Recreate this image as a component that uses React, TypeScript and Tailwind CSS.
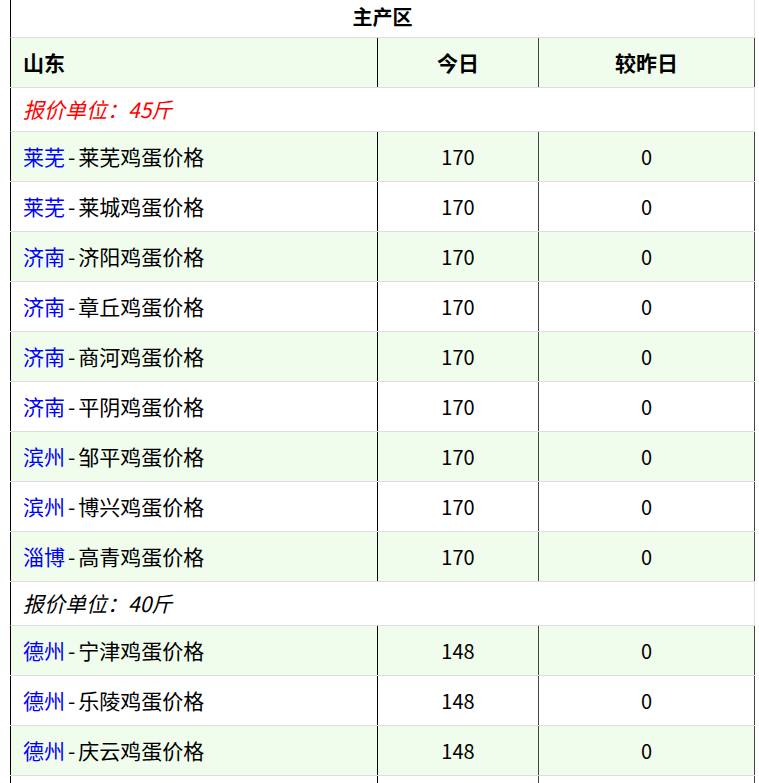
import React from 'react';

type Row = { city: string; name: string; today: string; diff: string };

const groups: { unit: string; red: boolean; rows: Row[] }[] = [
  {
    unit: '45斤',
    red: true,
    rows: [
      { city: '莱芜', name: '莱芜鸡蛋价格', today: '170', diff: '0' },
      { city: '莱芜', name: '莱城鸡蛋价格', today: '170', diff: '0' },
      { city: '济南', name: '济阳鸡蛋价格', today: '170', diff: '0' },
      { city: '济南', name: '章丘鸡蛋价格', today: '170', diff: '0' },
      { city: '济南', name: '商河鸡蛋价格', today: '170', diff: '0' },
      { city: '济南', name: '平阴鸡蛋价格', today: '170', diff: '0' },
      { city: '滨州', name: '邹平鸡蛋价格', today: '170', diff: '0' },
      { city: '滨州', name: '博兴鸡蛋价格', today: '170', diff: '0' },
      { city: '淄博', name: '高青鸡蛋价格', today: '170', diff: '0' },
    ],
  },
  {
    unit: '40斤',
    red: false,
    rows: [
      { city: '德州', name: '宁津鸡蛋价格', today: '148', diff: '0' },
      { city: '德州', name: '乐陵鸡蛋价格', today: '148', diff: '0' },
      { city: '德州', name: '庆云鸡蛋价格', today: '148', diff: '0' },
      { city: '德州', name: '夏津鸡蛋价格', today: '148', diff: '0' },
    ],
  },
];

function DataRow({ row, green }: { row: Row; green: boolean }) {
  return (
    <div className={`flex h-[50px] border-b border-[#dddddd] ${green ? 'bg-[#f1fdec]' : 'bg-white'}`}>
      <div className="w-[368px] border-l border-r border-l-black border-r-black pl-[12px] flex items-center text-[21px]">
        <a className="text-[#0000ff]">{row.city}</a>
        <span className="px-[3px]">-</span>
        <span>{row.name}</span>
      </div>
      <div className="w-[161px] border-r border-[#444444] flex items-center justify-center">{row.today}</div>
      <div className="w-[216px] border-r border-[#444444] flex items-center justify-center">{row.diff}</div>
    </div>
  );
}

export default function App() {
  return (
    <div
      className="pl-[10px] bg-white min-h-screen text-black text-[20px] leading-none"
      style={{ fontFamily: '"Noto Sans CJK SC", "Noto Sans", sans-serif' }}
    >
      <div className="w-[745px]">
        {/* title */}
        <div className="h-[38px] pb-[4px] border-b border-l border-r border-b-[#dddddd] border-l-black border-r-[#dddddd] flex items-center justify-center font-bold">
          主产区
        </div>

        {/* header */}
        <div className="flex h-[50px] border-b border-[#dddddd] bg-[#f1fdec] font-bold text-[21px]">
          <div className="w-[368px] border-l border-r border-l-black border-r-black pl-[12px] flex items-center">山东</div>
          <div className="w-[161px] border-r border-[#444444] flex items-center justify-center">今日</div>
          <div className="w-[216px] border-r border-[#444444] flex items-center justify-center">较昨日</div>
        </div>

        {groups.map((g) => (
          <React.Fragment key={g.unit}>
            <div className="h-[44px] border-b border-l border-r border-b-[#dddddd] border-l-black border-r-[#dddddd] pl-[12px] flex items-center bg-white text-[21px]">
              <i className={g.red ? 'text-[#ff0000]' : 'text-black'}>
                报价单位：{g.unit}
              </i>
            </div>
            {g.rows.map((r, i) => (
              <DataRow key={r.name} row={r} green={i % 2 === 0} />
            ))}
          </React.Fragment>
        ))}
      </div>
    </div>
  );
}
